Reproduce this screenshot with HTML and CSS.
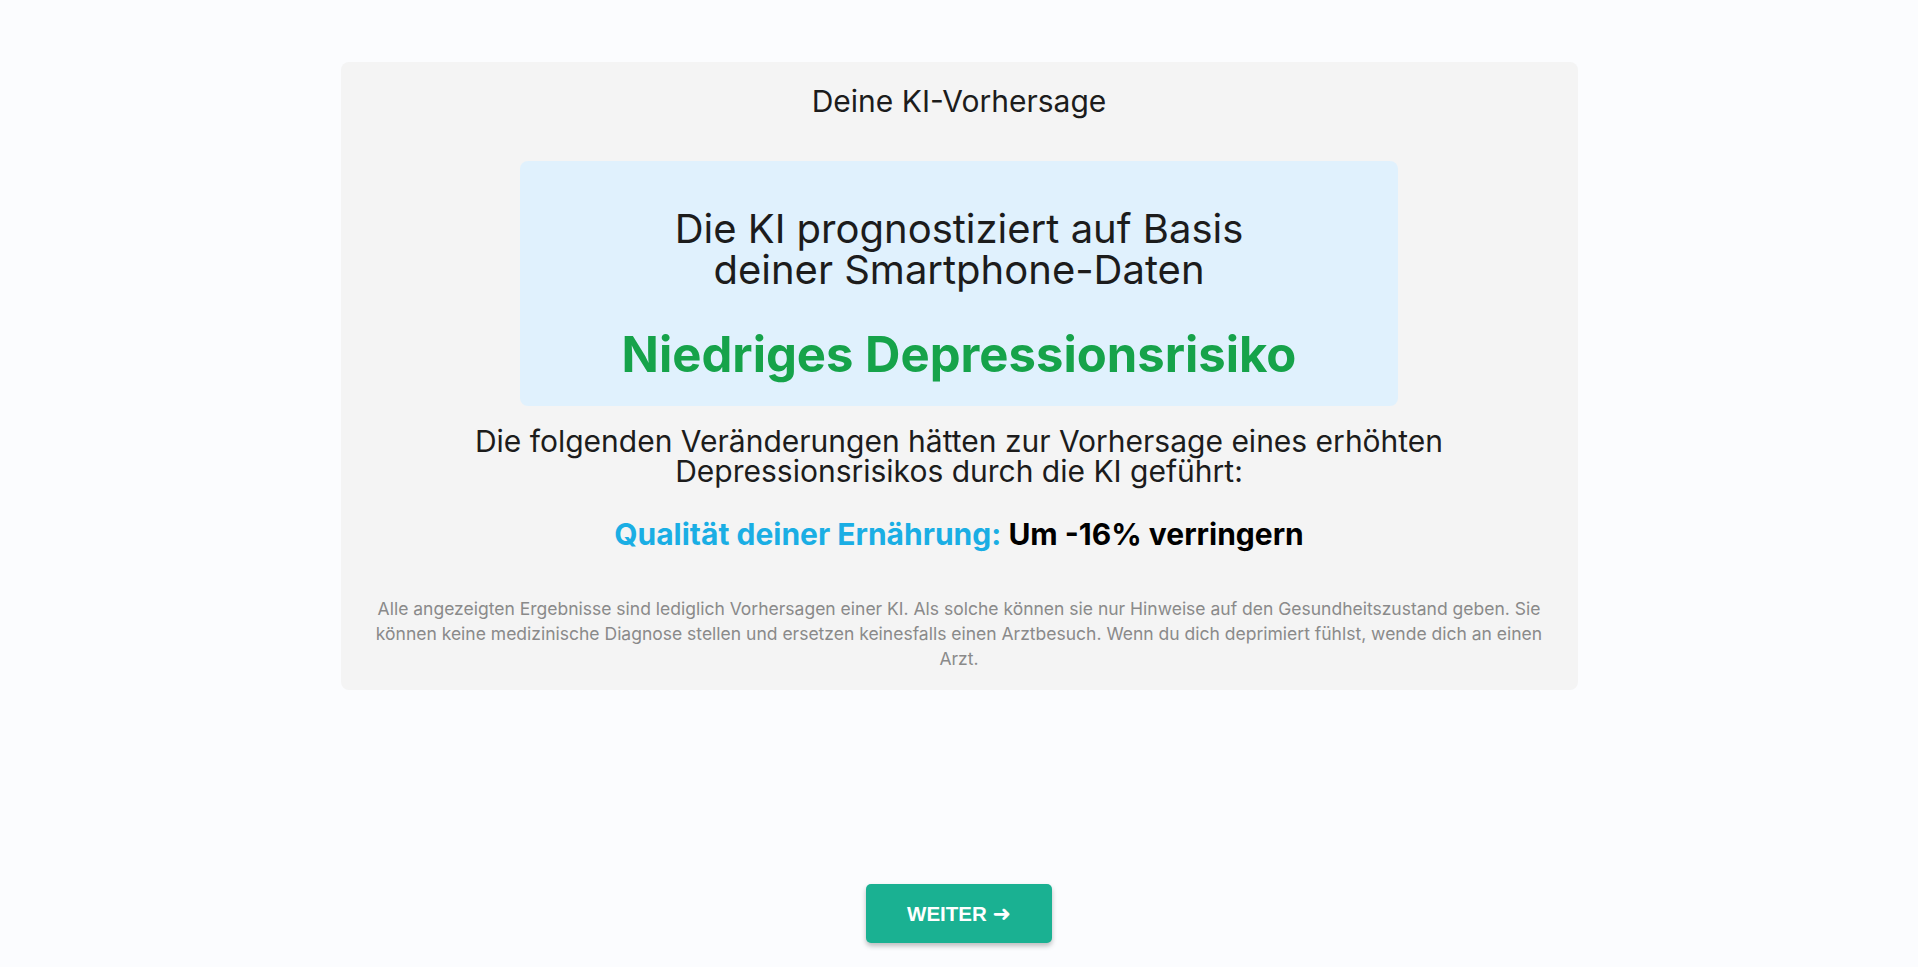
FILE: index.html
```html
<!DOCTYPE html>
<html lang="de">
<head>
<meta charset="utf-8">
<title>Deine KI-Vorhersage</title>
<link rel="stylesheet" href="styles.css">
</head>
<body>
<main class="page">
  <section class="card">
    <h1 class="card-title">Deine KI-Vorhersage</h1>
    <div class="result">
      <p class="result-lead">Die KI prognostiziert auf Basis<br>deiner Smartphone-Daten</p>
      <p class="result-value">Niedriges Depressionsrisiko</p>
    </div>
    <p class="changes-lead">Die folgenden Veränderungen hätten zur Vorhersage eines erhöhten<br>Depressionsrisikos durch die KI geführt:</p>
    <p class="change"><span class="change-label">Qualität deiner Ernährung:</span> <span class="change-value">Um -16% verringern</span></p>
    <p class="disclaimer">Alle angezeigten Ergebnisse sind lediglich Vorhersagen einer KI. Als solche können sie nur Hinweise auf den Gesundheitszustand geben. Sie können keine medizinische Diagnose stellen und ersetzen keinesfalls einen Arztbesuch. Wenn du dich deprimiert fühlst, wende dich an einen Arzt.</p>
  </section>
  <div class="spacer"></div>
  <button class="next-btn" type="button">WEITER <span class="arrow">➜</span></button>
</main>
</body>
</html>
```

FILE: styles.css
```css
* { box-sizing: border-box; }
html, body { margin: 0; padding: 0; }
body {
  background: #fbfcfe;
  font-family: Inter, "Noto Sans", sans-serif;
  color: #1c1c1c;
}
.page {
  min-height: 100vh;
  display: flex;
  flex-direction: column;
  align-items: center;
  padding-top: 62px;
  padding-bottom: 24px;
}
.card {
  width: 1237px;
  background: #f4f4f4;
  border-radius: 8px;
  padding: 21px 24px 19px;
  display: flex;
  flex-direction: column;
  align-items: center;
  text-align: center;
}
.card-title {
  margin: 0;
  font-size: 30px;
  line-height: 36px;
  font-weight: 400;
  color: #1c1c1c;
}
.result {
  margin-top: 42px;
  width: 878px;
  background: #e0f1fd;
  border-radius: 8px;
  padding: 47px 20px 22px;
}
.result-lead {
  margin: 0;
  font-size: 40px;
  line-height: 41px;
  font-weight: 400;
  color: #1c1c1c;
}
.result-value {
  margin: 36px 0 0;
  font-size: 49px;
  line-height: 57.6px;
  font-weight: 700;
  color: #16a34a;
}
.changes-lead {
  margin: 20px 0 0;
  font-size: 30px;
  line-height: 30px;
  color: #1c1c1c;
}
.change {
  margin: 32px 0 0;
  font-size: 30px;
  line-height: 33.6px;
  font-weight: 700;
}
.change-label { color: #1aaee4; }
.change-value { color: #000; }
.disclaimer {
  margin: 45px 0 0;
  font-size: 17.5px;
  line-height: 25px;
  color: #8a8a8a;
}
.spacer { flex: 1; }
.next-btn {
  width: 186px;
  height: 59px;
  border: none;
  border-radius: 5px;
  background: #1ab192;
  color: #fff;
  font-family: "Liberation Sans", Arial, sans-serif;
  font-weight: 700;
  font-size: 20.5px;
  box-shadow: 0 3px 5px rgba(0,0,0,0.25);
  cursor: pointer;
}
.arrow {
  font-family: "DejaVu Sans", sans-serif;
  font-size: 22px;
  font-weight: 700;
}
```
